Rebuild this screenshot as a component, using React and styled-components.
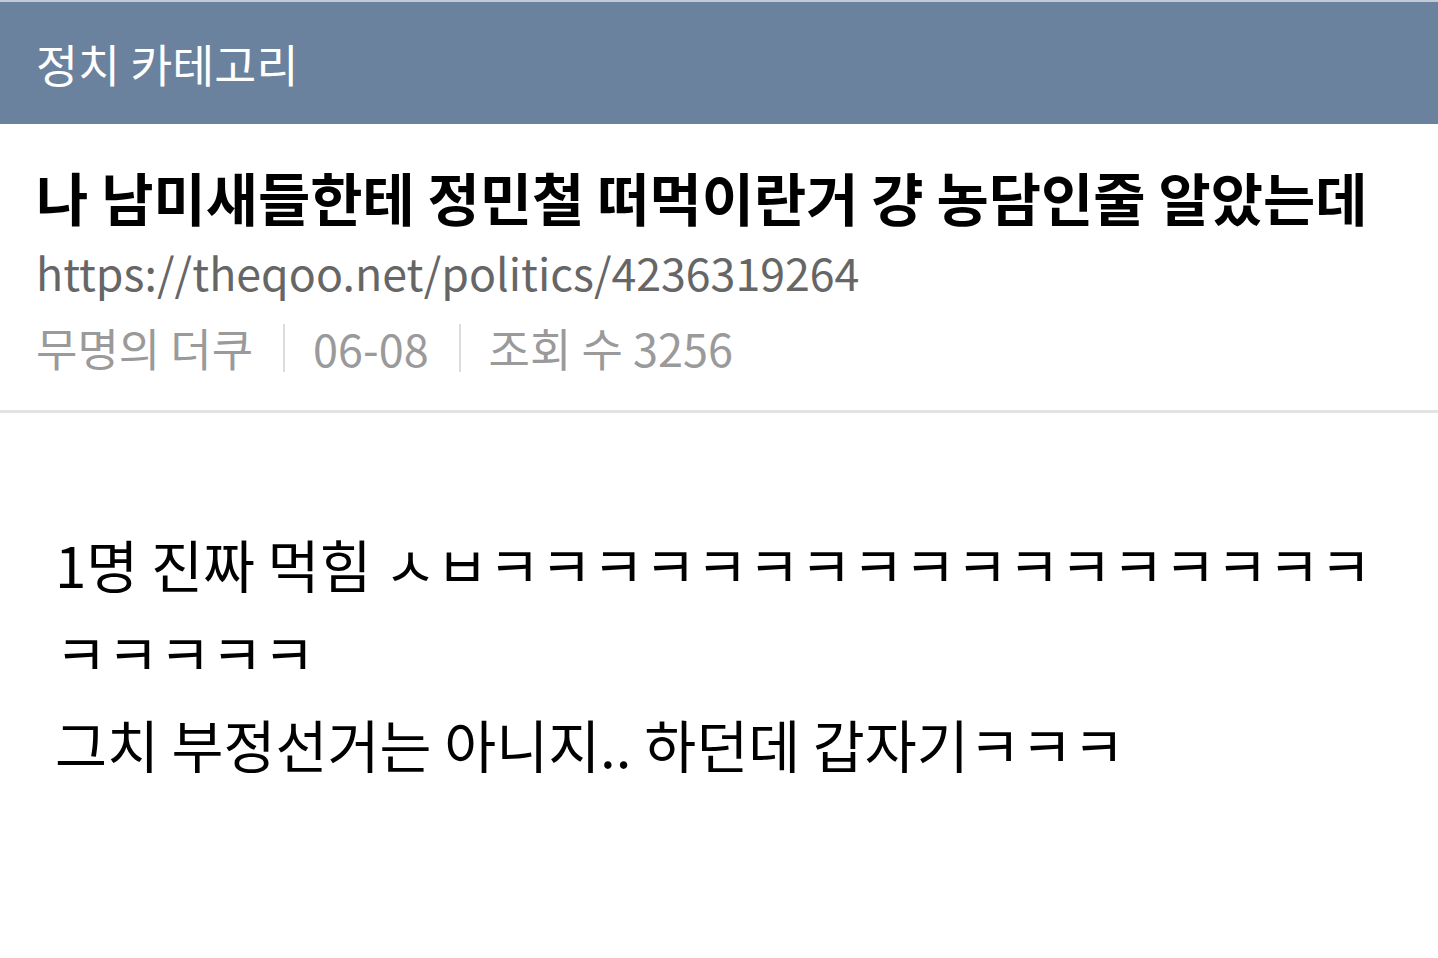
import React from 'react'
import styled, { createGlobalStyle } from 'styled-components'

const GlobalStyle = createGlobalStyle`
  html, body {
    margin: 0;
    padding: 0;
    background: #fff;
  }
  body {
    font-family: "Noto Sans CJK KR", "Noto Sans", sans-serif;
  }
`

const Page = styled.div`
  width: 1438px;
  min-height: 958px;
  background: #fff;
`

const CategoryBar = styled.header`
  height: 122px;
  border-top: 2px solid #c3cbd6;
  background-color: #6b829e;
  display: flex;
  align-items: center;
  padding-left: 36px;
  color: #fff;
  font-size: 45.7px;
`

const Info = styled.section`
  padding: 40px 36px 30px;
  border-bottom: 3px solid #e3e3e3;
  display: flex;
  flex-direction: column;
  gap: 12px;
`

const Title = styled.h1`
  margin: 0;
  font-size: 56.8px;
  line-height: 64px;
  font-weight: 700;
  color: #000;
`

const Url = styled.div`
  font-size: 44.7px;
  line-height: 64px;
  color: #666;
`

const Meta = styled.div`
  display: flex;
  align-items: center;
  font-size: 45px;
  line-height: 64px;
  color: #9a9a9a;
`

const Sep = styled.span`
  width: 2px;
  height: 48px;
  background: #dcdcdc;
  margin: 0 28px 0 30px;
`

const Body = styled.article`
  padding: 106px 55px 0;
  font-size: 56.5px;
  line-height: 88px;
  color: #000;
`

const Para = styled.p`
  margin: ${p => (p.$gap ? '4px' : '0')} 0 0;
`

const App = () => {
  return (
    <Page>
      <GlobalStyle />
      <CategoryBar>정치 카테고리</CategoryBar>
      <Info>
        <Title>나 남미새들한테 정민철 떠먹이란거 걍 농담인줄 알았는데</Title>
        <Url>https://theqoo.net/politics/4236319264</Url>
        <Meta>
          <span>무명의 더쿠</span>
          <Sep />
          <span>06-08</span>
          <Sep />
          <span>조회 수 3256</span>
        </Meta>
      </Info>
      <Body>
        <Para>1명 진짜 먹힘 ㅅㅂㅋㅋㅋㅋㅋㅋㅋㅋㅋㅋㅋㅋㅋㅋㅋㅋㅋㅋㅋㅋㅋㅋ</Para>
        <Para $gap>그치 부정선거는 아니지.. 하던데 갑자기ㅋㅋㅋ</Para>
      </Body>
    </Page>
  )
}

export default App
